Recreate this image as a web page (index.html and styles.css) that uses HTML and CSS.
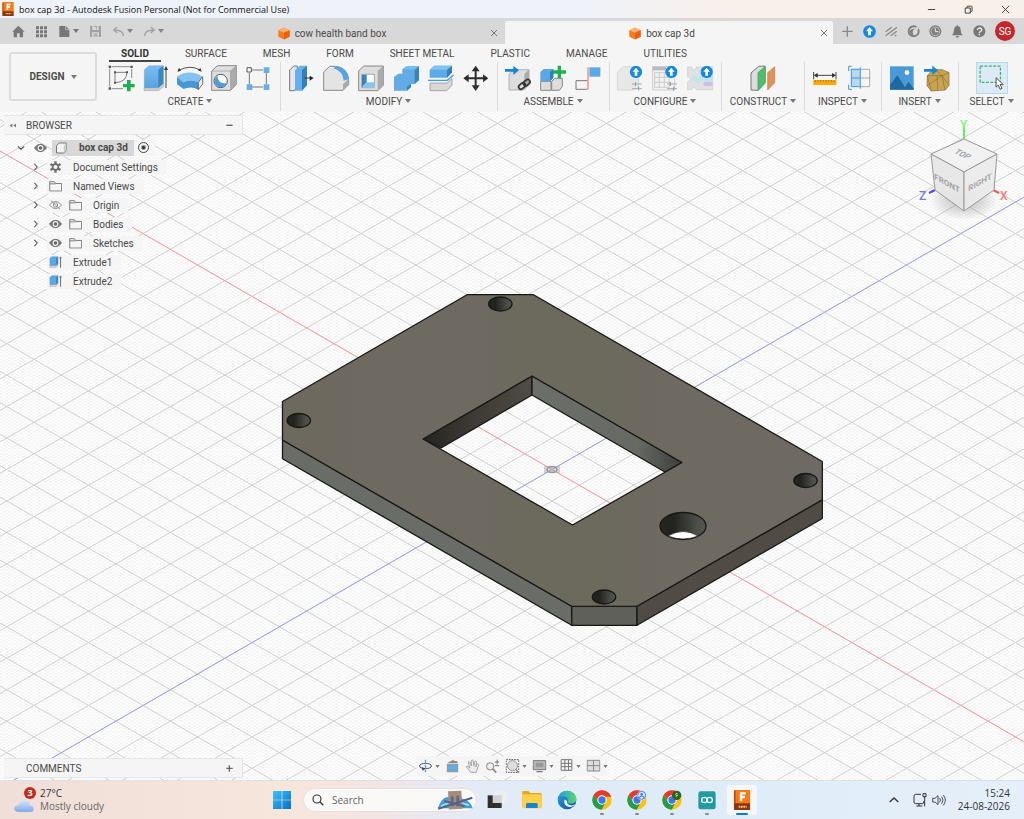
FILE: index.html
```html
<!DOCTYPE html>
<html lang="en">
<head>
<meta charset="utf-8">
<meta name="viewport" content="width=device-width, initial-scale=1">
<title>box cap 3d - Autodesk Fusion Personal</title>
<link rel="stylesheet" href="styles.css">
</head>
<body>
<svg class="defs" aria-hidden="true">
  <defs>
    <linearGradient id="blue" x1="0" y1="0" x2="0" y2="1"><stop offset="0" stop-color="#7cbdf0"/><stop offset="1" stop-color="#58a3dd"/></linearGradient>
    <linearGradient id="win" x1="0" y1="0" x2="1" y2="1"><stop offset="0" stop-color="#3cc3f5"/><stop offset="1" stop-color="#0670c9"/></linearGradient>
    <linearGradient id="cloud" x1="0" y1="0" x2="0" y2="1"><stop offset="0" stop-color="#d6e6fa"/><stop offset="1" stop-color="#7fa9e8"/></linearGradient>
    <linearGradient id="edge" x1="0" y1="0" x2="1" y2="1"><stop offset="0" stop-color="#2aa4dc"/><stop offset="1" stop-color="#0b4fa0"/></linearGradient>
    <linearGradient id="edgeTop" x1="0" y1="0" x2="1" y2="0"><stop offset="0" stop-color="#1f9fe0"/><stop offset="1" stop-color="#5fd46b"/></linearGradient>
    <linearGradient id="bore" x1="0" y1="0" x2="1" y2="0"><stop offset="0" stop-color="#25241f"/><stop offset=".3" stop-color="#23221e"/><stop offset=".75" stop-color="#484a46"/><stop offset="1" stop-color="#565854"/></linearGradient>
    <linearGradient id="wallA" x1="0" y1="0" x2="1" y2="0"><stop offset="0" stop-color="#24231f"/><stop offset=".3" stop-color="#37342f"/><stop offset="1" stop-color="#504c45"/></linearGradient>
    <linearGradient id="wallB" x1="0" y1="0" x2="1" y2="0"><stop offset="0" stop-color="#6c6e69"/><stop offset=".7" stop-color="#676964"/><stop offset="1" stop-color="#3d3f3b"/></linearGradient>
    <linearGradient id="plate" x1="0" y1="0" x2="1" y2="0"><stop offset="0" stop-color="#6d695d"/><stop offset=".14" stop-color="#6e6961"/><stop offset=".36" stop-color="#6e6a62"/><stop offset=".42" stop-color="#6c695d"/><stop offset=".6" stop-color="#6c695d"/><stop offset=".7" stop-color="#6e6961"/><stop offset="1" stop-color="#6e6962"/></linearGradient>
    <radialGradient id="cubeShade"><stop offset="0" stop-color="#888" stop-opacity=".6"/><stop offset="1" stop-color="#888" stop-opacity="0"/></radialGradient>
    <symbol id="cube" viewBox="0 0 36 38"><path d="M18 1 35 9v20L18 37 1 29V9z" fill="#f97a1c"/><path d="M18 1 35 9 18 17 1 9z" fill="#ffb16b"/><path d="M18 17 35 9v20L18 37z" fill="#ea6210"/></symbol>
    <symbol id="eye" viewBox="0 0 36 24"><path d="M0 12Q18-11 36 12 18 35 0 12z" fill="#777"/><circle cx="18" cy="12" r="8" fill="#f5f5f5"/><circle cx="18" cy="12" r="5" fill="#666"/></symbol>
    <symbol id="folder" viewBox="0 0 36 32"><path d="M2 4h13l3 5h17v21H2zM2 10h16" fill="none" stroke="#777" stroke-width="2.6"/></symbol>
    <symbol id="chev" viewBox="0 0 12 20"><path d="M2 2l7 8-7 8" fill="none" stroke="#555" stroke-width="2.6"/></symbol>
    <symbol id="extrude" viewBox="0 0 40 38"><path d="M2 33v-2h20l6-6v6l-6 6H2z" fill="#ddd" stroke="#888"/><path d="M2 8 8 2h20v22l-6 6H2z" fill="#5aa9e4" stroke="#3580bd"/><path d="M22 8 28 2v22l-6 6z" fill="#3c86c2"/><path d="M36 37V6M32 8l4-5 4 5" fill="none" stroke="#444" stroke-width="2.4"/></symbol>
    <symbol id="up" viewBox="0 0 38 38"><circle cx="19" cy="19" r="18.500" fill="#1688df"/><path d="M19 6 9 18h6v12h8V18h6z" fill="#fff"/></symbol>
    <symbol id="sliders" viewBox="0 0 34 30"><path d="M2 8h30M2 22h30" stroke="#aaa" stroke-width="3"/><path d="M12 2v12M22 16v12" stroke="#6aa4bd" stroke-width="3"/></symbol>
    <symbol id="chrome" viewBox="0 0 60 60"><circle cx="30" cy="30" r="29" fill="#fbc116"/><path d="M5 15A29 29 0 0 1 55 15L58 20H30A12 12 0 0 0 19 35z" fill="#e33b2e"/><path d="M5 15A29 29 0 0 0 29 59L41 37A13 13 0 0 1 19 36z" fill="#249c4b"/><circle cx="30" cy="30" r="14" fill="#fff"/><circle cx="30" cy="30" r="11" fill="#3c79e6"/></symbol>
    <symbol id="fusion" viewBox="0 0 50 60"><path d="M2 0h48v42H2z" fill="#f97a14"/><path d="M0 4l6-4v56l-6 4z" fill="#c44c06"/><path d="M2 40h48v20H2z" fill="#8c3608"/><path d="M22 34V10h14M22 21h12" fill="none" stroke="#fff" stroke-width="7"/><path d="M15 50h24" stroke="#f5c3a0" stroke-width="6" stroke-dasharray="5 2"/></symbol>
  </defs>
</svg>

<div class="app">
  <header class="titlebar">
    <svg class="app-logo" viewBox="0 0 50 60"><use href="#fusion"/></svg>
    <span class="title">box cap 3d - Autodesk Fusion Personal (Not for Commercial Use)</span>
    <div class="win-controls">
      <button aria-label="Minimize"><svg viewBox="0 0 30 30"><path d="M3 15h24" stroke="#333" stroke-width="3"/></svg></button>
      <button aria-label="Restore"><svg viewBox="0 0 30 30"><path d="M4 10h17v17H4zM10 10V6q0-2 3-2h11q3 0 3 3v13q0 2-5 2" fill="none" stroke="#333" stroke-width="3"/></svg></button>
      <button aria-label="Close"><svg viewBox="0 0 30 30"><path d="M3 3l24 24M27 3 3 27" stroke="#333" stroke-width="3"/></svg></button>
    </div>
  </header>

  <div class="tabbar">
    <div class="quick">
      <button class="q" aria-label="Home"><svg viewBox="0 0 39 39"><path d="M19 2 1 20h4v17h10V25h8v12h10V20h5z" fill="#777"/></svg></button>
      <button class="q" aria-label="Data panel"><svg viewBox="0 0 39 39"><path d="M3 8h34M3 20h34M3 32h34" stroke="#777" stroke-width="9" stroke-dasharray="9 3"/></svg></button>
      <button class="q" aria-label="File"><svg viewBox="0 0 39 39"><path d="M4 3h19l11 11v22H4z" fill="#777"/><path d="M23 3v11h11" fill="none" stroke="#d8d8d8" stroke-width="2"/></svg><i class="caret"></i></button>
      <button class="q dim" aria-label="Save"><svg viewBox="0 0 39 39"><path d="M3 3h33v33H3z" fill="#999"/><path d="M10 4h19v11H10zM9 22h21v13H9z" fill="#d8d8d8"/><path d="M17 4h5v9M13 27h13M13 32h13" stroke="#999" stroke-width="3" fill="none"/></svg></button>
      <button class="q dim" aria-label="Undo"><svg viewBox="0 0 39 39"><path d="M34 33Q35 16 7 15M16 6 5 15l11 9" fill="none" stroke="#999" stroke-width="4"/></svg><i class="caret"></i></button>
      <button class="q dim" aria-label="Redo"><svg viewBox="0 0 39 39"><path d="M5 33Q4 16 32 15M23 6l11 9-11 9" fill="none" stroke="#999" stroke-width="4"/></svg><i class="caret"></i></button>
    </div>
    <div class="doc-tab"><button class="doc"><svg viewBox="0 0 36 38"><use href="#cube"/></svg>cow health band box</button><button class="doc-close" aria-label="Close cow health band box"><svg viewBox="0 0 24 24"><path d="M3 3l18 18M21 3 3 21" stroke="#777" stroke-width="3"/></svg></button></div>
    <div class="doc-tab active"><button class="doc"><svg viewBox="0 0 36 38"><use href="#cube"/></svg>box cap 3d</button><button class="doc-close" aria-label="Close box cap 3d"><svg viewBox="0 0 24 24"><path d="M3 3l18 18M21 3 3 21" stroke="#777" stroke-width="3"/></svg></button></div>
    <div class="account">
      <button aria-label="New design"><svg viewBox="0 0 39 39"><path d="M19 4v31M4 19h31" stroke="#888" stroke-width="4"/></svg></button>
      <button aria-label="Updates"><svg viewBox="0 0 38 38"><use href="#up"/></svg></button>
      <button aria-label="Extensions"><svg viewBox="0 0 39 39"><path d="M2 20 20 7M2 32 36 7M17 32l18-13M30 33l4-3" stroke="#888" stroke-width="4"/></svg></button>
      <button aria-label="Online status"><svg viewBox="0 0 39 39"><circle cx="20" cy="19" r="15" fill="#d8d8d8" stroke="#808080" stroke-width="6"/><path d="M8 18q6-9 16-6-8 3-7 9l3 12-9-4z" fill="#808080"/><path d="M22 14l5 5 9-9-6-6z" fill="#d8d8d8"/></svg></button>
      <button aria-label="Job status"><svg viewBox="0 0 39 39"><circle cx="19" cy="19" r="18" fill="#808080"/><circle cx="19" cy="19" r="13" fill="none" stroke="#d8d8d8" stroke-width="2"/><path d="M19 10v10h9" fill="none" stroke="#eee" stroke-width="3"/></svg></button>
      <button aria-label="Notifications"><svg viewBox="0 0 39 39"><path d="M3 31q6-6 6-17Q11 4 17 4q0-4 2-4t2 4q7 0 8 10 0 11 6 17zM14 33h10q-1 5-5 5t-5-5z" fill="#777"/></svg></button>
      <button aria-label="Help"><svg viewBox="0 0 39 39"><circle cx="19" cy="19" r="18" fill="#777"/><path d="M13 15q1-6 7-6 7 1 6 7-1 3-4 4-3 1-3 5M19 27v4" fill="none" stroke="#eee" stroke-width="4"/></svg></button>
      <button class="avatar" aria-label="Account">SG</button>
    </div>
  </div>

  <section class="ribbon">
    <button class="workspace">DESIGN <i class="caret"></i></button>
    <div class="ribbon-main">
      <nav class="ribbon-tabs">
        <button class="on">SOLID</button><button>SURFACE</button><button>MESH</button><button>FORM</button><button>SHEET METAL</button><button>PLASTIC</button><button>MANAGE</button><button>UTILITIES</button>
      </nav>
      <div class="groups">
        <div class="group first">
          <div class="tools">
            <button aria-label="Create sketch"><svg viewBox="330 195 78 78"><path d="M338 200h54M332 206v54M338 266h34M398 206v28" fill="none" stroke="#777" stroke-width="2.500"/><path d="M348 217h36q-1 30-36 31z" fill="none" stroke="#666" stroke-width="2.500"/><path d="M329 197h7v7h-7zM394 197h7v7h-7zM329 262h7v7h-7zM345 214h6v6h-6zM381 214h6v6h-6zM345 245h6v6h-6z" fill="#555"/><path d="M384 240h11v12h12v10h-12v12h-11v-12h-12v-10h12z" fill="#1fae50"/></svg></button>
            <button aria-label="Extrude"><svg viewBox="431 195 78 78"><path d="M434 262h43l16-13v10l-15 13h-44z" fill="#ccc" stroke="#888"/><path d="M435 209l14-12h43v53l-15 13h-42z" fill="url(#blue)" stroke="#4a94ce"/><path d="M477 209l15-12v53l-15 13z" fill="#3c86c2"/><path d="M500 264v-58" stroke="#444" stroke-width="3"/><path d="M494 210l6-12 6 12z" fill="#333"/></svg></button>
            <button aria-label="Revolve"><svg viewBox="534 195 78 78"><path d="M538 212q35-20 67-1" fill="none" stroke="#333" stroke-width="2.500"/><path d="M535 215l5-12 6 9zM608 215l-4-11-7 7z" fill="#333"/><path d="M534 230q35-25 77 0l-13 17q-23-11-46 0z" fill="#84c2f2"/><path d="M534 230l18 17q23-11 46 0v22q-22-12-44-2l-20-14z" fill="#4797d6"/><path d="M598 247l13-17v22l-13 17z" fill="#eee" stroke="#555" stroke-width="2.500"/></svg></button>
            <button aria-label="Hole"><svg viewBox="638 195 78 78"><path d="M640 213l17-16h57v57l-17 17h-57z" fill="#dedede" stroke="#888" stroke-width="3"/><path d="M697 213l17-16v57l-17 17z" fill="#aaa"/><path d="M640 213h57v58M697 213l17-16" fill="none" stroke="#999" stroke-width="2"/><circle cx="667" cy="243" r="20" fill="#fff" stroke="#555" stroke-width="3"/><path d="M657 228q2 24 29 22-6 12-18 12-18-1-19-20 0-8 8-14z" fill="#4d9edb"/></svg></button>
            <button aria-label="Pattern"><svg viewBox="737 195 78 78"><path d="M757 210h34M750 219v34M758 261h33M801 219v33" stroke="#777" stroke-width="3"/><path d="M743 203h13v13h-13z" fill="#fff" stroke="#555" stroke-width="3"/><path d="M793 202h17v17h-17zM742 253h17v17h-17zM793 253h17v17h-17z" fill="#66afe8"/></svg></button>
          </div>
          <button class="glabel">CREATE<i class="caret"></i></button>
        </div>
        <div class="group">
          <div class="tools">
            <button aria-label="Press pull"><svg viewBox="23 75 78 78"><path d="M28 90l12-12h11v60l-9 14H28z" fill="#e5e5e5" stroke="#777" stroke-width="3"/><path d="M44 90l15-13h21v58l-15 17H44z" fill="#64b0ea"/><path d="M65 90l15-13v58l-15 17z" fill="#357fba"/><path d="M73 114h18" stroke="#333" stroke-width="3"/><path d="M88 107l12 7-12 8z" fill="#222"/></svg></button>
            <button aria-label="Fillet"><svg viewBox="128 75 78 78"><path d="M130 96l18-17h18q36 5 39 39v16l-17 17h-58z" fill="#e4e4e4" stroke="#888" stroke-width="3"/><path d="M188 133l17-17v18l-17 17z" fill="#aaa"/><path d="M158 84l14-6q29 8 34 39l-16 5q-2-29-32-38z" fill="#58a5e0"/></svg></button>
            <button aria-label="Shell"><svg viewBox="231 75 78 78"><path d="M233 93l15-15h59v58l-17 16h-57z" fill="#ddd" stroke="#888" stroke-width="3"/><path d="M290 93l17-15v58l-17 16z" fill="#aaa"/><path d="M242 103h38v40h-38z" fill="#fff" stroke="#888" stroke-width="2"/><path d="M243 104h14v23l-14 15z" fill="#3584bf"/><path d="M243 142l14-15h23v15z" fill="#7fc5f6"/></svg></button>
            <button aria-label="Combine"><svg viewBox="333 75 78 78"><path d="M336 111l13-10h12V88l13-10h37v42l-13 12h-11v9l-12 11h-39z" fill="#62abe4"/><path d="M398 89l13-11v42l-13 12zM375 140l12-9v10l-12 11z" fill="#3a82bb"/><path d="M361 88l13-10h37l-13 11z" fill="#79bef1"/></svg></button>
            <button aria-label="Split body"><svg viewBox="438 75 78 78"><path d="M444 129h51l15-13v20l-16 16h-50z" fill="#d8d8d8" stroke="#888" stroke-width="2"/><path d="M438 121h58l19-16" fill="none" stroke="#3f9be0" stroke-width="4"/><path d="M443 89l14-12h53v20l-15 16h-52z" fill="#5caae6"/><path d="M495 89l15-12v20l-15 16z" fill="#357eb9"/><path d="M443 89l14-12h53l-15 12z" fill="#82c3f3"/></svg></button>
            <button aria-label="Move"><svg viewBox="541 75 78 78"><path d="M579 88v53M552 115h55" stroke="#2d2d2d" stroke-width="6"/><path d="M579 77l-12 17h24zM579 153l-12-17h24zM542 115l16-12v24zM617 115l-16-12v24z" fill="#2d2d2d"/></svg></button>
          </div>
          <button class="glabel">MODIFY<i class="caret"></i></button>
        </div>
        <div class="group">
          <div class="tools">
            <button aria-label="Insert derive"><svg viewBox="670 75 78 78"><path d="M682 102l14-13h46v45l-16 16h-44z" fill="#ddd" stroke="#999" stroke-width="2"/><path d="M728 102l14-13v45l-14 14z" fill="#aaa"/><path d="M670 87h25V77l17 14-17 14V95h-25z" fill="#1685d6"/><g fill="none" stroke="#333" stroke-width="5"><rect x="710" y="131" width="22" height="14" rx="7" transform="rotate(-40 721 138)"/><rect x="724" y="121" width="22" height="14" rx="7" transform="rotate(-40 735 128)"/></g></svg></button>
            <button aria-label="New component"><svg viewBox="774 75 78 78"><path d="M776 124h31v27h-31zM809 124l9-9h23v24l-9 12h-23z" fill="#ddd" stroke="#888" stroke-width="3"/><path d="M775 96l10-9h29v27l-9 9h-30z" fill="#5aa8e2"/><path d="M804 96l10-9v27l-10 9z" fill="#3180ba"/><path d="M827 77h10v14h15v10h-15v14h-10v-14h-14V91h14z" fill="#1fae50"/></svg></button>
            <button aria-label="Joint"><svg viewBox="875 75 78 78"><path d="M912 122h-34v26h34" fill="none" stroke="#777" stroke-width="3"/><path d="M918 82h33v28h-33z" fill="#5da9e2"/><path d="M914 82v67" stroke="#f06058" stroke-width="3"/></svg></button>
          </div>
          <button class="glabel">ASSEMBLE<i class="caret"></i></button>
        </div>
        <div class="group">
          <div class="tools">
            <button aria-label="Configure design"><svg viewBox="53 75 78 78"><path d="M54 97l18-17h34l12 12v50l-14 8H54z" fill="#e7e7e7" stroke="#ccc" stroke-width="2"/><use href="#sliders" x="96" y="124" width="34" height="30"/><use href="#up" x="91" y="77" width="38" height="38"/></svg></button>
            <button aria-label="Configuration table"><svg viewBox="155 75 78 78"><path d="M157 80h66v70h-66z" fill="#f2f2f2" stroke="#bbb" stroke-width="2"/><path d="M157 80h40v11h-40z" fill="#bbb"/><path d="M163 98h44v44h-44zM163 112h44M163 127h44M177 98v44M192 98v44" fill="none" stroke="#bbb" stroke-width="2"/><use href="#sliders" x="198" y="124" width="34" height="30"/><use href="#up" x="194" y="77" width="38" height="38"/></svg></button>
            <button aria-label="Theme table"><svg viewBox="258 75 78 78"><path d="M260 81h12q0 8 7 8t7-8h49v68h-49q0-7-7-7t-7 7h-12v-24q8 0 8-7t-8-7z" fill="#e1e1e1" stroke="#ccc" stroke-width="2"/><path d="M274 108h62v15h-37q-2 7-8 7t-7-7h-10z" fill="#bfe7eb"/><rect x="307" y="125" width="28" height="13" rx="6" fill="#d1bdeb"/><use href="#up" x="298" y="77" width="38" height="38"/></svg></button>
          </div>
          <button class="glabel">CONFIGURE<i class="caret"></i></button>
        </div>
        <div class="group wide">
          <div class="tools">
            <button aria-label="Offset plane"><svg viewBox="449 75 78 78"><path d="M452 99l23-20 18-1v47l-21 26-20-1z" fill="#ddd" stroke="#777" stroke-width="3"/><path d="M473 98l22-19v50l-22 23z" fill="#4fbd70" stroke="#319a51" stroke-width="2"/><path d="M502 98l21-18v48l-21 22z" fill="#e29258" stroke="#c97a43" stroke-width="2"/></svg></button>
          </div>
          <button class="glabel">CONSTRUCT<i class="caret"></i></button>
        </div>
        <div class="group">
          <div class="tools">
            <button aria-label="Measure"><svg viewBox="638 75 78 78"><path d="M643 96v22M710 96v22M650 106h53" stroke="#444" stroke-width="3"/><path d="M643 106l12-7v14zM710 106l-12-7v14z" fill="#333"/><path d="M642 120h69v15h-69z" fill="#ffa900"/><path d="M648 120v6M656 120v5M664 120v6M672 120v5M680 120v6M688 120v5M696 120v6M704 120v5" stroke="#8a6000" stroke-width="2"/></svg></button>
            <button aria-label="Section analysis"><svg viewBox="741 75 78 78"><path d="M754 86h26v54h-26z" fill="#b9d8ec"/><path d="M783 88h26v52h-26M783 114h28" fill="none" stroke="#aaa" stroke-width="3"/><path d="M754 87v53M781 82v64M754 88h26M754 114h26M754 140h26M755 79h-9v14M746 134v14h10" fill="none" stroke="#3998e5" stroke-width="3"/></svg></button>
          </div>
          <button class="glabel">INSPECT<i class="caret"></i></button>
        </div>
        <div class="group">
          <div class="tools">
            <button aria-label="Insert canvas"><svg viewBox="870 75 78 78"><path d="M873 79h71v70h-71z" fill="#4b9ad8"/><path d="M873 135l22-30 23 37 10-17 16 20v4h-71z" fill="#216a9e"/><circle cx="924" cy="98" r="7" fill="#ffffd5"/></svg></button>
            <button aria-label="Insert mesh"><svg viewBox="975 75 78 78"><path d="M985 107l16-18h29l20 9v38l-11 14-42 3-13-16z" fill="#c9a450" stroke="#88682a" stroke-width="2"/><path d="M985 107h44l21-9M1029 107l9 43M985 137l44-30M1029 107l21 30M985 107l12 46M1010 89l19 18M1014 107l2 45" fill="none" stroke="#8f7030" stroke-width="2"/><path d="M975 87h25V77l17 14-17 14V95h-25z" fill="#1685d6"/></svg></button>
          </div>
          <button class="glabel">INSERT<i class="caret"></i></button>
        </div>
        <div class="group last">
          <div class="tools">
            <button class="selected" aria-label="Select"><svg viewBox="1123 67 96 96"><path d="M1133 77h65v52h-65z" fill="none" stroke="#30b66e" stroke-width="4" stroke-dasharray="9 5"/><path d="M1184 114v30l7-6 6 13 6-3-6-12h10z" fill="#fff" stroke="#444" stroke-width="3"/></svg></button>
          </div>
          <button class="glabel">SELECT<i class="caret"></i></button>
        </div>
      </div>
    </div>
  </section>

  <main class="canvas">
    <svg class="scene" viewBox="0 112 1024 668" preserveAspectRatio="xMidYMid slice" role="img" aria-label="Model of a box cap on the ground grid">
      <path id="grid-minor" class="minor"/>
      <path id="grid-major" class="major"/>
      <path class="axis-x" d="M-548-165.200 1652 1104.200"/>
      <path class="axis-z" d="M-548 1104.200 1652-165.200"/>
      <g fill="none" stroke="#999" stroke-width="1.500"><ellipse cx="552" cy="469.500" rx="5" ry="3"/><path d="M544 469.500h16" stroke="#999" stroke-width="7" opacity=".4"/></g>
      <g stroke="#171714" stroke-width="1.300" stroke-linejoin="round">
        <path d="M282.500 440 571.700 606.300V625.300L282.500 458.700z" fill="#6a6c67"/>
        <path d="M571.700 606.300H637V625.300H571.700z" fill="#5f6059"/>
        <path d="M637 606.300 822.300 499.700V518.500L637 625.300z" fill="#504c45"/>
        <path d="M532 376V395L441 448 423 439z" fill="url(#wallA)"/>
        <path d="M532 376 682 462.500 665 472 532 395z" fill="url(#wallB)"/>
        <path fill-rule="evenodd" fill="url(#plate)" d="M467 294.700H533.500L822.300 461.500V499.700L637 606.300H571.700L282.500 440V401.500zM532 376 423 439 572.500 525 682 462.500z"/>
        <g fill="url(#bore)"><ellipse cx="500.300" cy="304" rx="11.700" ry="7"/><ellipse cx="298.800" cy="420.500" rx="11.700" ry="7"/><ellipse cx="805.500" cy="480.500" rx="11.700" ry="7"/><ellipse cx="604" cy="597" rx="11.700" ry="7"/><ellipse cx="683" cy="526" rx="23" ry="13.500"/></g>
        <path d="M668 536q15-9 30 0-15 6-30 0z" fill="#fff" stroke-width=".6"/>
      </g>
    </svg>

    <aside class="browser">
      <div class="panel-head"><button class="collapse" aria-label="Collapse"><svg viewBox="0 0 24 14"><path d="M10 1v12L2 7zM21 1v12l-8-6z" fill="#777"/></svg></button><h2>BROWSER</h2><button class="head-action" aria-label="Minimize panel"><svg viewBox="0 0 21 21"><path d="M1 10h19" stroke="#666" stroke-width="4"/></svg></button></div>
      <ul class="tree">
        <li class="root"><svg class="chev" viewBox="0 0 20 12"><path d="M2 2l8 7 8-7" fill="none" stroke="#444" stroke-width="2.600"/></svg><svg class="ic eye" viewBox="0 0 36 24"><use href="#eye"/></svg><span class="pill"><svg class="ic" viewBox="0 0 36 36"><path d="M3 11l8-8h22v22l-8 8H3z" fill="#f2f2f2" stroke="#777" stroke-width="3" stroke-linejoin="round"/><path d="M25 11l8-8v22l-8 8z" fill="#ccc"/></svg>box cap 3d</span><label class="activate"><input type="radio" name="active" checked aria-label="Activate box cap 3d"></label></li>
        <li><svg class="chev" viewBox="0 0 12 20"><use href="#chev"/></svg><span class="row"><svg class="ic" viewBox="0 0 36 36"><g stroke="#707070" stroke-width="7"><path d="M18 1v34M3 9l30 18M3 27 33 9"/></g><circle cx="18" cy="18" r="11" fill="#707070"/><circle cx="18" cy="18" r="6" fill="#f5f5f5"/></svg><span>Document Settings</span></span></li>
        <li><svg class="chev" viewBox="0 0 12 20"><use href="#chev"/></svg><span class="row"><svg class="ic" viewBox="0 0 36 32"><use href="#folder"/></svg><span>Named Views</span></span></li>
        <li><svg class="chev" viewBox="0 0 12 20"><use href="#chev"/></svg><span class="row"><svg class="ic" viewBox="0 0 36 26"><path d="M1 13q17-20 34 0-17 20-34 0zM5 1l26 24" fill="none" stroke="#888" stroke-width="2.500"/><circle cx="18" cy="13" r="6" fill="none" stroke="#888" stroke-width="2.500"/></svg><svg class="ic" viewBox="0 0 36 32"><use href="#folder"/></svg><span>Origin</span></span></li>
        <li><svg class="chev" viewBox="0 0 12 20"><use href="#chev"/></svg><span class="row"><svg class="ic" viewBox="0 0 36 24"><use href="#eye"/></svg><svg class="ic" viewBox="0 0 36 32"><use href="#folder"/></svg><span>Bodies</span></span></li>
        <li><svg class="chev" viewBox="0 0 12 20"><use href="#chev"/></svg><span class="row"><svg class="ic" viewBox="0 0 36 24"><use href="#eye"/></svg><svg class="ic" viewBox="0 0 36 32"><use href="#folder"/></svg><span>Sketches</span></span></li>
        <li class="leaf"><span class="row"><svg class="ic" viewBox="0 0 40 38"><use href="#extrude"/></svg><span>Extrude1</span></span></li>
        <li class="leaf"><span class="row"><svg class="ic" viewBox="0 0 40 38"><use href="#extrude"/></svg><span>Extrude2</span></span></li>
      </ul>
    </aside>

    <svg class="viewcube" viewBox="0 0 124 110" role="img" aria-label="View cube">
      <ellipse cx="64" cy="88" rx="34" ry="20" fill="url(#cubeShade)"/>
      <path d="M64 14v13" stroke="#5cf05c" stroke-width="2"/><path d="M35 78l-6 3" stroke="#4a4aff" stroke-width="2"/><path d="M93 78l6 3" stroke="#f55" stroke-width="2"/>
      <g fill="#f1f1f1" fill-opacity=".93" stroke="#999" stroke-linejoin="round"><path d="M64 27 97 42 64 60 31 42z"/><path d="M31 42 64 60V99L35 78z" fill="#e6e6e6"/><path d="M97 42 64 60V99L94 78z" fill="#ebebeb"/></g>
      <text class="face" transform="translate(47 71) skewY(29)" text-anchor="middle" y="3">FRONT</text>
      <text class="face" transform="translate(80 70) skewY(-29)" text-anchor="middle" y="3">RIGHT</text>
      <text class="face" transform="translate(63 42) rotate(25) skewX(-25)" text-anchor="middle" y="3">TOP</text>
      <text class="ax" x="60" y="17" fill="#7cf57c">Y</text><text class="ax" x="19" y="88" fill="#7474ff">Z</text><text class="ax" x="100" y="88" fill="#f77">X</text>
    </svg>

    <div class="comments"><h2>COMMENTS</h2><button class="head-action" aria-label="Add comment"><svg viewBox="0 0 21 21"><path d="M1 10h19M10 1v19" stroke="#666" stroke-width="4"/></svg></button></div>

    <div class="navbar">
      <button aria-label="Orbit"><svg viewBox="0 0 42 42"><ellipse cx="21" cy="21" rx="18" ry="8" fill="none" stroke="#555" stroke-width="3"/><path d="M21 2v38" stroke="#4aa8e8" stroke-width="4" stroke-dasharray="12 3"/><path d="M10 24l2 11 9-6z" fill="#444"/></svg><i class="caret"></i></button>
      <button aria-label="Look at"><svg viewBox="0 0 42 42"><path d="M4 14h34v26H4z" fill="#999"/><path d="M8 18h26v18H8z" fill="#62ade8"/><path d="M5 12 24 2l2 4 10 1v5z" fill="#888"/></svg></button>
      <button aria-label="Pan"><svg viewBox="0 0 42 42"><path d="M15 40Q9 29 2 23q4-4 11 4L8 9q4-3 6 2l4 10-1-16q4-4 6 0l2 16 3-14q4-3 5 1l-2 16 4-9q5-2 5 2l-8 23z" fill="#ececec" stroke="#999" stroke-width="2.500"/></svg></button>
      <button aria-label="Zoom"><svg viewBox="0 0 42 42"><circle cx="14" cy="22" r="11" fill="#eee" stroke="#888" stroke-width="3"/><path d="M22 30l10 10" stroke="#9e7864" stroke-width="5"/><path d="M28 9h13M35 2v14M28 20h13" stroke="#777" stroke-width="3"/></svg></button>
      <button aria-label="Fit"><svg viewBox="0 0 42 42"><path d="M2 2h38v38H2z" fill="none" stroke="#555" stroke-width="3" stroke-dasharray="5 3"/><circle cx="21" cy="20" r="15" fill="#ddd" stroke="#999" stroke-width="3"/><path d="M31 31l8 9" stroke="#9e7864" stroke-width="4"/></svg><i class="caret"></i></button>
      <button aria-label="Display settings"><svg viewBox="0 0 42 42"><path d="M2 5h38v27H2z" fill="#bbb" stroke="#777" stroke-width="3"/><path d="M9 11h24v14H9z" fill="#999"/><path d="M12 38h18" stroke="#777" stroke-width="4"/></svg><i class="caret"></i></button>
      <button aria-label="Grid and snaps"><svg viewBox="0 0 42 42"><path d="M5 2h32v32H5zM5 13h32M5 23h32M16 2v32M27 2v32" fill="none" stroke="#777" stroke-width="3"/></svg><i class="caret"></i></button>
      <button aria-label="Viewports"><svg viewBox="0 0 42 42"><path d="M2 4h38v32H2z" fill="#ddd" stroke="#888" stroke-width="3"/><path d="M2 20h38M21 4v32" stroke="#888" stroke-width="3"/></svg><i class="caret"></i></button>
    </div>
  </main>

  <footer class="taskbar">
    <button class="weather"><span class="wicon"><svg viewBox="0 0 60 40"><path d="M12 38q-12-1-11-11 1-9 12-9Q18 1 34 3q13 2 14 15 11 2 11 11 0 9-10 9z" fill="url(#cloud)"/></svg><b>3</b></span><span class="wtext"><span>27°C</span><span class="sub">Mostly cloudy</span></span></button>
    <div class="task-center">
      <button class="task" aria-label="Start"><svg viewBox="0 0 60 60"><path d="M3 3h26v26H3zM31 3h26v26H31zM3 31h26v26H3zM31 31h26v26H31z" fill="url(#win)"/></svg></button>
      <label class="search"><svg class="mag" viewBox="0 0 36 36"><circle cx="15" cy="15" r="12" fill="none" stroke="#333" stroke-width="3.500"/><path d="M24 24l10 10" stroke="#333" stroke-width="4"/></svg><input type="text" placeholder="Search" aria-label="Search"><svg class="bridge" viewBox="0 0 110 58"><path d="M2 54q14-34 30-34l40 4q30 6 37 30z" fill="#3f9fcd"/><path d="M12 48q40-22 86-3" fill="none" stroke="#a7dcee" stroke-width="5"/><path d="M34 2l40-1 4 55-42 2z" fill="#a58b7b"/><path d="M42 48V21q4-9 9 0v27zM59 47V20q5-9 9 0v27z" fill="#5e6b86"/><path d="M4 56 108 22M22 32l62 16" stroke="#576288" stroke-width="6"/></svg></label>
      <button class="task" aria-label="Task view"><svg viewBox="0 0 60 60"><path d="M2 16h42v38H2z" fill="#303030"/><path d="M17 2h42v37H17z" fill="#eee" fill-opacity=".85"/></svg></button>
      <button class="task" aria-label="File Explorer"><svg viewBox="0 0 60 60"><path d="M1 6q0-3 3-3h15l7 6h30q3 0 3 4v37H1z" fill="#e9a81c"/><path d="M1 13h58v42H1z" fill="#ffd04a"/><path d="M12 54V43q0-4 4-4h27q4 0 4 4v11z" fill="#1684cd"/></svg></button>
      <button class="task" aria-label="Edge"><svg viewBox="0 0 60 60"><circle cx="30" cy="30" r="28" fill="url(#edge)"/><path d="M3 25Q7 2 31 2q25 2 27 25 0 13-16 14-12 0-10-7 3-12-10-15Q8 17 3 25z" fill="url(#edgeTop)"/><path d="M23 28q-6 19 13 23 13 1 18-8-7 5-15 2-10-2-9-12z" fill="#eef8ff"/></svg></button>
      <button class="task run" aria-label="Chrome"><svg viewBox="0 0 60 60"><use href="#chrome"/></svg></button>
      <button class="task run" aria-label="Chrome, second profile"><svg viewBox="0 0 60 60"><use href="#chrome"/><circle cx="44" cy="16" r="14" fill="#dbe8ff"/><circle cx="44" cy="16" r="12" fill="none" stroke="#4a80dc" stroke-width="3"/><circle cx="44" cy="13" r="4" fill="#4a80dc"/><path d="M36 23q8-9 16 0" fill="none" stroke="#4a80dc" stroke-width="4"/></svg></button>
      <button class="task run" aria-label="Chrome, third profile"><svg viewBox="0 0 60 60"><use href="#chrome"/><circle cx="44" cy="16" r="14" fill="#2b671e"/><path d="M47 11q-6-2-6 2t5 3-5 4" fill="none" stroke="#fff" stroke-width="2"/></svg></button>
      <button class="task run" aria-label="Arduino"><svg viewBox="0 0 60 60"><rect x="4" y="4" width="52" height="54" rx="7" fill="#249a9d"/><g fill="none" stroke="#e7ffff" stroke-width="4"><circle cx="22" cy="30" r="8"/><circle cx="38" cy="30" r="8"/></g></svg></button>
      <button class="task run current" aria-label="Fusion"><svg viewBox="0 0 50 60"><use href="#fusion"/></svg></button>
    </div>
    <div class="tray">
      <button aria-label="Hidden icons"><svg viewBox="0 0 42 42"><path d="M8 27l13-12 13 12" fill="none" stroke="#333" stroke-width="4"/></svg></button>
      <button class="net" aria-label="Network and volume"><svg viewBox="0 0 42 42"><path d="M24 4H8Q3 4 3 9v18q0 5 5 5h20q4 0 4-5v-3M10 39h18M18 32v7M30 2h9v9h-9zM35 11v29" fill="none" stroke="#333" stroke-width="3"/></svg><svg viewBox="0 0 42 42"><path d="M2 16h7l9-8v27l-9-8H2zM23 15q5 6 0 13M29 11q8 10 0 21M34 6q12 15 0 31" fill="none" stroke="#333" stroke-width="2.600"/></svg></button>
      <time class="clock"><span>15:24</span><span>24-08-2026</span></time>
    </div>
  </footer>
</div>
<script src="grid.js"></script>
</body>
</html>
```
FILE: styles.css
```css
* { box-sizing: border-box; }
body { margin: 0; font-family: Roboto, "Liberation Sans", sans-serif; font-size: 10px; color: #4a4a4a; }
button { border: 0; padding: 0; margin: 0; background: none; font: inherit; color: inherit; display: flex; align-items: center; justify-content: center; }
h2 { margin: 0; font-size: 10px; font-weight: 400; color: #4a4a4a; }
svg { display: block; flex: none; }
.defs { position: absolute; width: 0; height: 0; }
.caret { width: 0; height: 0; border: 3px solid transparent; border-top: 4px solid #777; border-bottom: 0; flex: none; }
.app { height: 100vh; display: flex; flex-direction: column; overflow: hidden; }

.titlebar { height: 18px; flex: none; display: flex; align-items: center; padding-left: 2px; background: linear-gradient(90deg, #eef3fa 0%, #eff2f8 58%, #faf0ea 72%, #faf0ea 100%); font-family: "Open Sans", "Noto Sans", sans-serif; font-size: 9px; color: #111; }
.app-logo { width: 12px; height: 14px; }
.title { margin-left: 5px; white-space: nowrap; }
.win-controls { margin-left: auto; display: flex; }
.win-controls button { width: 37px; height: 18px; }
.win-controls svg { width: 9px; height: 9px; }

.tabbar { height: 26px; flex: none; display: flex; align-items: stretch; background: #d8d8d8; padding-top: 3px; }
.quick { width: 175px; flex: none; display: flex; align-items: center; padding: 0 0 3px 12px; gap: 10px; }
.q { gap: 2px; }
.q svg { width: 13px; height: 13px; }
.dim { opacity: 0.85; }
.doc-tab { flex: 1; display: flex; align-items: center; border-radius: 3px 3px 0 0; padding-right: 4px; }
.doc-tab:not(.active) { padding-right: 6px; }
.doc-tab.active { background: #f5f5f5; }
.doc { flex: 1; gap: 5px; white-space: nowrap; padding-top: 1px; }
.doc svg { width: 12px; height: 13px; }
.doc-close { width: 10px; height: 16px; }
.doc-close svg { width: 8px; height: 8px; }
.account { width: 191px; flex: none; display: flex; align-items: center; justify-content: space-between; padding: 0 9px 3px 8px; }
.account svg { width: 13px; height: 13px; }
.account .avatar { width: 20px; height: 20px; border-radius: 50%; background: #c4262e; color: #fff; }

.ribbon { flex: none; display: flex; background: #f5f5f5; height: 68px; }
.workspace { margin: 8px 11px 11px 9px; width: 88px; flex: none; border: 2px solid #dcdcdc; border-radius: 3px; gap: 6px; font-weight: 700; }
.ribbon-main { flex: 1; min-width: 0; display: flex; flex-direction: column; }
.ribbon-tabs { display: flex; flex: none; gap: 12px; height: 18px; padding-left: 1px; }
.ribbon-tabs button { padding: 2px 12px 0; white-space: nowrap; border-bottom: 2px solid transparent; }
.ribbon-tabs .on { border-bottom-color: #444; font-weight: 700; color: #333; }
.groups { display: flex; flex: 1; }
.group { flex: none; display: flex; flex-direction: column; align-items: center; padding: 3px 8px 0 7px; border-right: 1px solid #dcdcdc; margin-bottom: 4px; }
.group.first { padding: 3px 9px 0 1px; }
.group.first .tools { gap: 8px; }
.group.wide { width: 83px; padding-inline: 0; }
.group.last { flex: 1; border-right: 0; padding: 0; }
.tools { display: flex; gap: 9px; }
.tools svg { width: 26px; height: 26px; overflow: visible; }
.tools .selected { background: #dbeaf4; border: 1px solid #b4daef; width: 32px; height: 32px; }
.tools .selected svg { width: 30px; height: 30px; }
.glabel { flex: none; gap: 3px; height: 20px; white-space: nowrap; }
.group.last .glabel { height: 14px; }

.canvas { flex: 1; min-height: 0; position: relative; background: #fff; overflow: hidden; }
.scene { width: 100%; height: 100%; }
.minor { fill: none; stroke: #f4f4f4; stroke-width: 1; }
.major { fill: none; stroke: #cfcfcf; stroke-width: 1; }
.axis-x { stroke: #ff9c9c; stroke-width: 1; }
.axis-z { stroke: #9c9cff; stroke-width: 1; }

.browser { position: absolute; left: 4px; top: 3px; width: 239px; }
.panel-head, .comments { display: flex; align-items: center; height: 20px; background: #f5f5f5; border: 1px solid #e6e6e6; border-left: 0; padding-right: 9px; }
.collapse { width: 22px; }
.collapse svg { width: 8px; height: 5px; margin-right: 5px; }
.head-action { margin-left: auto; }
.head-action svg { width: 7px; height: 7px; }
.tree { list-style: none; margin: 3px 0 0; padding: 0; }
.tree li { height: 19px; display: flex; align-items: center; padding-left: 29px; white-space: nowrap; }
.tree li:not(.root) { padding-top: 1px; }
.tree .chev { width: 6px; height: 8px; margin-right: 8px; }
.tree .ic { width: 13px; height: 12px; }
.tree .leaf { padding-left: 43px; }
.row { display: flex; align-items: center; gap: 7px; height: 15px; background: #f5f5f5; padding: 0 9px 0 2px; }
.row span { padding-left: 4px; }
.tree .root { padding-left: 13px; }
.root .chev { width: 8px; height: 6px; margin-right: 9px; }
.pill { display: flex; align-items: center; gap: 11px; height: 16px; background: #d8d8d8; margin-left: 5px; padding: 0 6px 0 3px; font-weight: 700; }
.activate { background: #f5f5f5; height: 16px; display: flex; align-items: center; padding: 0 6px 0 4px; }
.activate input { appearance: none; margin: 0; width: 11px; height: 11px; border: 1px solid #444; border-radius: 50%; background: radial-gradient(circle, #333 0 1px, #f5f5f5 3px); }

.viewcube { position: absolute; right: 0; top: 0; width: 124px; height: 110px; }
.face { font-size: 8px; font-weight: 700; fill: #a0a4a8; }
.ax { font-size: 12px; font-weight: 500; }

.comments { position: absolute; left: 4px; bottom: 2px; width: 239px; padding-left: 22px; }
.navbar { position: absolute; left: 50%; bottom: 4px; transform: translateX(-50%); display: flex; align-items: center; gap: 6px; height: 20px; padding: 0 0 0 2px; background: #f5f5f5; }
.navbar button { gap: 3px; }
.navbar svg { width: 14px; height: 14px; }
.navbar .caret { border-width: 3px 2px 0; }

.taskbar { height: 39px; flex: none; display: flex; align-items: center; background: linear-gradient(90deg, #f0dfd8 0%, #f7e6dc 28%, #f3e5e2 36%, #e3ebf7 46%, #deecf8 65%, #e5eff9 100%); border-top: 1px solid #dde1e6; font-family: "Open Sans", "Noto Sans", sans-serif; font-size: 10px; color: #333; }
.weather { flex: 1; justify-content: flex-start; padding-left: 14px; gap: 5px; text-align: left; }
.wicon { position: relative; width: 21px; height: 26px; display: flex; align-items: flex-end; }
.wicon svg { width: 20px; height: 14px; }
.wicon b { position: absolute; left: 10px; top: 0; width: 12px; height: 12px; border-radius: 50%; background: #c42b1c; color: #fff; font-size: 9px; line-height: 12px; text-align: center; }
.wtext, .clock { display: flex; flex-direction: column; line-height: 13px; white-space: nowrap; }
.sub { color: #666; }
.task-center { flex: none; display: flex; align-items: center; gap: 5px; padding-left: 5px; }
.task { width: 30px; height: 30px; position: relative; border-radius: 3px; }
.task:first-child { width: 20px; margin-right: 6px; }
.task svg { width: 20px; height: 20px; }
.task.run::after { content: ""; position: absolute; left: 50%; bottom: 0; width: 4px; height: 2px; margin-left: -2px; background: #888; border-radius: 1px; }
.task.current { background: #f4f8fc; }
.task.current::after { width: 12px; margin-left: -6px; background: #0a78d4; }
.search { display: flex; align-items: center; width: 174px; height: 24px; border-radius: 12px; background: #fbf8f8; border: 1px solid #e8e0e0; padding: 0 3px 0 8px; }
.mag { width: 12px; height: 12px; }
.search input { flex: 1; min-width: 0; border: 0; padding: 0 0 0 8px; outline: 0; background: none; font: inherit; color: #555; }
.search input::placeholder { color: #666; opacity: 1; }
.bridge { width: 36px; height: 20px; }
.tray { flex: 1; display: flex; align-items: center; justify-content: flex-end; gap: 12px; padding-right: 14px; }
.tray svg { width: 14px; height: 14px; }
.net { gap: 5px; }
.clock { text-align: right; }
```
FILE: grid.js
```js
// Isometric ground grid: two families of lines through the world origin.
const origin = { x: 552, y: 469.5 };
const reach = 1100;
const pitch = 31.46;
const slope = 0.577;

function gridPath(step, count) {
  let d = "";
  for (let k = -count; k <= count; k++) {
    const y = origin.y + k * step;
    const rise = reach * slope;
    d += `M${origin.x - reach} ${y - rise}L${origin.x + reach} ${y + rise}`;
    d += `M${origin.x - reach} ${y + rise}L${origin.x + reach} ${y - rise}`;
  }
  return d;
}

document.getElementById("grid-minor").setAttribute("d", gridPath(pitch / 10, 330));
document.getElementById("grid-major").setAttribute("d", gridPath(pitch, 33));
```
